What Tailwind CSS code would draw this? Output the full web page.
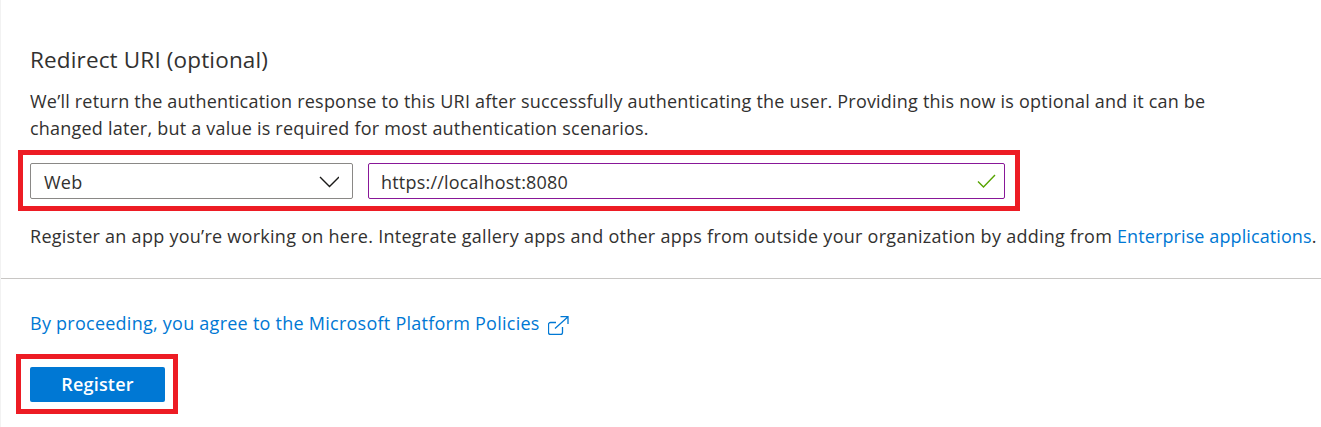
<!DOCTYPE html>
<html lang="en">
<head>
    <meta charset="UTF-8">
    <title>Register an application</title>
    <script src="https://cdn.jsdelivr.net/npm/@tailwindcss/browser@4"></script>
</head>
<body class="bg-white font-['Open_Sans',sans-serif] text-[#323130] h-[427px] overflow-hidden">
    <div class="h-full border-l border-[#f2f2f2]">
        <section class="pl-[29px] pr-2 pt-[45px] h-[233px] border-b border-[#c8c6c4] box-content">
            <h2 class="text-[22.5px] leading-[30px] tracking-[0.15px]">Redirect URI (optional)</h2>
            <p class="mt-[13px] text-[18px] leading-[27px] w-[1230px] tracking-[0.21px]">We’ll return the authentication response to this URI after successfully authenticating the user. Providing this now is optional and it can be changed later, but a value is required for most authentication scenarios.</p>
            <div class="mt-[8px] -ml-[12px] w-[1002px] h-[61px] border-[5px] border-[#ed1c24] flex items-center gap-[15px] pl-[7px]">
                <div class="w-[323px] h-[36px] border border-[#8a8886] rounded-[2px] flex items-center justify-between pl-[13px] pr-[13px] text-[18px] tracking-[0.2px]">
                    <span class="pt-[4px]">Web</span>
                    <svg class="mt-[3px]" width="20" height="12" viewBox="0 0 20 12" fill="none" stroke="#1b1a19" stroke-width="1.4"><path d="M1 1l9.5 9.5L20 1"/></svg>
                </div>
                <div class="w-[637px] h-[36px] border border-[#881798] rounded-[2px] flex items-center justify-between pl-[12px] pr-[8px] text-[18px] tracking-[0.2px]">
                    <span class="pt-[4px]">https://localhost:8080</span>
                    <svg width="19" height="14" viewBox="0 0 19 14" fill="none" stroke="#57a300" stroke-width="1.4"><path d="M1 7.5l5.5 5.5L18 1"/></svg>
                </div>
            </div>
            <p class="mt-[12px] text-[18px] leading-[27px] whitespace-nowrap tracking-[0.27px]">Register an app you’re working on here. Integrate gallery apps and other apps from outside your organization by adding from <a class="text-[#0078d4] tracking-[0.1px]">Enterprise applications</a>.</p>
        </section>
        <div class="pl-[29px] pt-[32px]">
            <a class="flex items-center gap-[8px] text-[#0078d4] text-[18px] leading-[24px] tracking-[0.25px]">
                By proceeding, you agree to the Microsoft Platform Policies
                <svg class="mt-[5px]" width="21" height="19" viewBox="0 0 21 19" fill="none" stroke="#0078d4" stroke-width="1.3"><path d="M8 6.5H2.5A2 2 0 0 0 .5 8.5v8a2 2 0 0 0 2 2h10a2 2 0 0 0 2-2V11"/><path d="M7 12.5L20 .7M12.5 .7H20V8"/></svg>
            </a>
            <div class="mt-[19px] -ml-[14px] w-[162px] h-[60px] border-[5px] border-[#ed1c24] pl-[9px] pt-[8px]">
                <button class="w-[135px] h-[35px] bg-[#0078d4] rounded-[2px] text-white text-[18px] font-semibold tracking-[0.2px]">Register</button>
            </div>
        </div>
    </div>
</body>
</html>
